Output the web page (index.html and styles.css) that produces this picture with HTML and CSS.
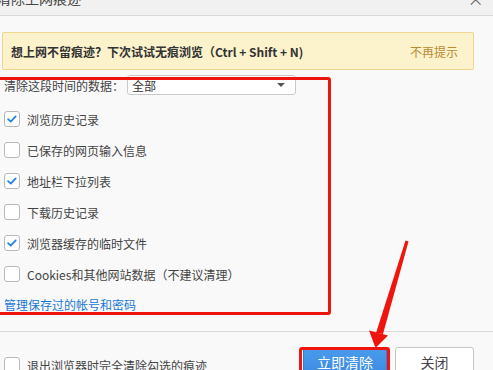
FILE: index.html
```html
<!DOCTYPE html>
<html lang="zh-CN">
<head>
<meta charset="utf-8">
<title>清除上网痕迹</title>
<link rel="stylesheet" href="styles.css">
</head>
<body>
<div class="window">
  <div class="titlebar">
    <span class="title">清除上网痕迹</span>
    <span class="close">×</span>
  </div>

  <div class="notice">
    <span class="notice-text">想上网不留痕迹？下次试试无痕浏览（Ctrl + Shift + N)</span>
    <span class="notice-dismiss">不再提示</span>
  </div>

  <div class="options">
    <div class="range-row">
      <span class="range-label">清除这段时间的数据：</span>
      <div class="select"><span>全部</span><span class="caret"></span></div>
    </div>
    <div class="check-row"><span class="box checked"><svg viewBox="0 0 16 16"><polyline points="3.5,8.2 6.6,11 12.2,5"/></svg></span><span>浏览历史记录</span></div>
    <div class="check-row"><span class="box"></span><span>已保存的网页输入信息</span></div>
    <div class="check-row"><span class="box checked"><svg viewBox="0 0 16 16"><polyline points="3.5,8.2 6.6,11 12.2,5"/></svg></span><span>地址栏下拉列表</span></div>
    <div class="check-row"><span class="box"></span><span>下载历史记录</span></div>
    <div class="check-row"><span class="box checked"><svg viewBox="0 0 16 16"><polyline points="3.5,8.2 6.6,11 12.2,5"/></svg></span><span>浏览器缓存的临时文件</span></div>
    <div class="check-row"><span class="box"></span><span>Cookies和其他网站数据（不建议清理）</span></div>
    <a class="manage-link">管理保存过的帐号和密码</a>
  </div>

  <div class="footer">
    <div class="check-row exit-row"><span class="box"></span><span>退出浏览器时完全清除勾选的痕迹</span></div>
    <div class="buttons">
      <button class="btn btn-primary">立即清除</button>
      <button class="btn btn-default">关闭</button>
    </div>
  </div>

  <div class="annot-box"></div>
  <div class="annot-btn"></div>
  <svg class="annot-arrow" viewBox="0 0 493 370">
    <polygon points="405.5,240.5 408.5,241.5 383,334 376,333"/>
    <polygon points="369,330.5 388,335.5 375.5,348"/>
  </svg>
</div>
</body>
</html>
```

FILE: styles.css
```css
* { box-sizing: border-box; }

html, body {
  margin: 0;
  padding: 0;
  width: 493px;
  height: 370px;
  overflow: hidden;
  background: #f9f9f9;
}

.window {
  position: relative;
  width: 493px;
  height: 370px;
  overflow: hidden;
  font-family: "Noto Sans CJK SC", "Noto Sans", sans-serif;
  font-size: 12px;
  color: #333;
  background: #f9f9f9;
}

.titlebar {
  height: 16px;
  background: #f1f1f1;
  border-bottom: 1px solid #d8d8d8;
  display: flex;
  justify-content: space-between;
  overflow: hidden;
}

.title {
  font-size: 14px;
  line-height: 14px;
  margin-top: -9px;
  margin-left: -3px;
  color: #444;
}

.close {
  font-size: 20px;
  line-height: 14px;
  margin-top: -8px;
  margin-right: 9px;
  color: #666;
  font-family: "DejaVu Sans", sans-serif;
  font-weight: 300;
}

.notice {
  margin: 16px 19px 0 2px;
  height: 38px;
  background: #fcf2cb;
  border: 1px solid #efd68f;
  border-radius: 2px;
  display: flex;
  align-items: center;
  justify-content: space-between;
  padding: 0 15px 0 8px;
}

.notice-text {
  font-weight: bold;
  color: #333;
}

.notice-dismiss {
  color: #b88a36;
}

.options {
  margin-top: 5px;
  padding-left: 4px;
  display: flex;
  flex-direction: column;
  gap: 15px;
}

.range-row {
  display: flex;
  align-items: center;
  height: 20px;
  margin-bottom: 1px;
}

.range-label {
  width: 123px;
  color: #444;
}

.select {
  width: 169px;
  height: 20px;
  background: #fff;
  border: 1px solid #c9c9c9;
  border-radius: 3px;
  display: flex;
  align-items: center;
  justify-content: space-between;
  padding: 0 10px 0 4px;
  color: #333;
}

.caret {
  width: 0;
  height: 0;
  border-left: 4px solid transparent;
  border-right: 4px solid transparent;
  border-top: 4px solid #555;
}

.check-row {
  display: flex;
  align-items: center;
  height: 16px;
  gap: 7px;
  color: #444;
}

.box {
  width: 16px;
  height: 16px;
  flex: none;
  background: #fff;
  border: 1px solid #b9b9b9;
  border-radius: 3px;
  display: flex;
  align-items: center;
  justify-content: center;
}

.box svg {
  width: 16px;
  height: 16px;
  fill: none;
  stroke: #1f84e2;
  stroke-width: 2;
  stroke-linecap: round;
  stroke-linejoin: round;
}

.manage-link {
  color: #1a78d2;
  height: 16px;
  line-height: 16px;
}

.footer {
  margin-top: 18px;
  border-top: 1px solid #dadada;
  padding: 15px 19px 0 4px;
  display: flex;
  justify-content: space-between;
  align-items: flex-start;
}

.exit-row {
  margin-top: 10px;
}

.buttons {
  display: flex;
  gap: 8px;
}

.btn {
  font-family: "Noto Sans CJK SC", "Noto Sans", sans-serif;
  font-size: 14px;
  height: 30px;
  border-radius: 3px;
  padding: 0;
}

.btn-primary {
  width: 84px;
  background: linear-gradient(#4b9bec, #3a8ae3);
  border: 1px solid #2f7fd8;
  color: #fff;
}

.btn-default {
  width: 79px;
  background: #fff;
  border: 1px solid #c6c6c6;
  color: #444;
}

.annot-box {
  position: absolute;
  left: -3px;
  top: 77px;
  width: 334px;
  height: 238px;
  border: 3px solid #f0140f;
  border-radius: 3px;
  pointer-events: none;
}

.annot-btn {
  position: absolute;
  left: 299px;
  top: 347px;
  width: 91px;
  height: 30px;
  border: 3px solid #f0140f;
  border-radius: 3px;
  pointer-events: none;
}

.annot-arrow {
  position: absolute;
  left: 0;
  top: 0;
  width: 493px;
  height: 370px;
  fill: #f0140f;
  pointer-events: none;
}
```
